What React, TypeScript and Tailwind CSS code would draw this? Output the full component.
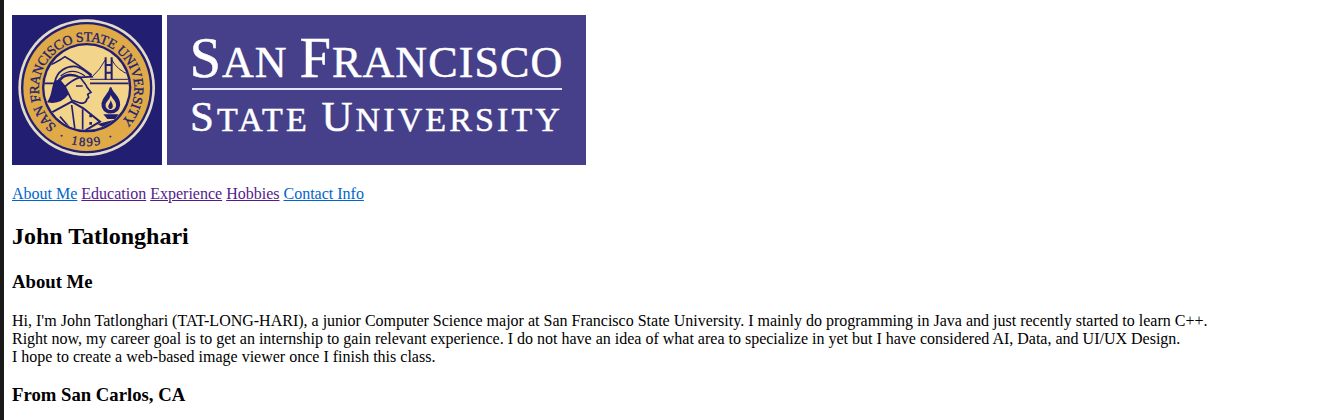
const LINKS = [
  { label: "About Me", visited: false },
  { label: "Education", visited: true },
  { label: "Experience", visited: true },
  { label: "Hobbies", visited: true },
  { label: "Contact Info", visited: false },
];

// drawn in the coordinates of a 3x crop of the logo, hence the viewBox
function Seal() {
  return (
    <svg viewBox="36 45 450 450" className="h-[150px] w-[150px] shrink-0 bg-[#221f73]" aria-label="Seal">
      <defs>
        <path id="seal-top" d="M 170 378 A 143 143 0 1 1 350 378" />
        <path id="seal-bottom" d="M 111 355 A 175 175 0 0 0 409 355" />
        <clipPath id="seal-inner">
          <circle cx="260" cy="263" r="127" />
        </clipPath>
      </defs>
      <circle cx="260" cy="263" r="205" fill="#e4dcc8" />
      <circle cx="260" cy="263" r="197" fill="#221f73" />
      <circle cx="260" cy="263" r="190" fill="#e0aa48" />
      <circle cx="260" cy="263" r="134" fill="#221f73" />
      <circle cx="260" cy="263" r="127" fill="#f2d48a" />
      <text fill="#221f73" stroke="#221f73" strokeWidth="1" fontSize="41" fontFamily="'Liberation Serif', serif">
        <textPath href="#seal-top" textLength="685" lengthAdjust="spacing">
          SAN FRANCISCO STATE UNIVERSITY
        </textPath>
      </text>
      <text fill="#221f73" stroke="#221f73" strokeWidth="1" fontSize="38" letterSpacing="5" wordSpacing="10" fontFamily="'Liberation Serif', serif" textAnchor="middle">
        <textPath href="#seal-bottom" startOffset="50%">
          · 1899 ·
        </textPath>
      </text>
      <g clipPath="url(#seal-inner)">
        <g transform="translate(120 150)" fill="none" stroke="#221f73" strokeWidth="5">
          <path d="M 0 55 Q 40 45 75 20 Q 110 40 155 75" />
          <path d="M 197 90 V 22 M 215 90 V 22 M 197 45 H 215 M 197 68 H 215" strokeWidth="6" />
          <path d="M 155 82 Q 180 60 197 28 M 215 28 Q 230 60 270 75 M 150 88 H 270" strokeWidth="3" />
          <path d="M 0 100 H 50 M 150 100 H 270" />
          <path d="M 45 95 C 50 65 80 45 110 50 C 125 55 145 70 155 80 L 120 82 C 95 72 70 75 60 92 Z" fill="#f2d48a" />
          <path d="M 62 78 C 85 60 110 60 135 78 M 55 90 C 75 70 100 68 120 82" strokeWidth="4" />
          <path d="M 45 95 C 35 115 40 135 25 155 C 50 160 70 150 85 130 L 75 110 L 60 92 Z" fill="#221f73" />
          <path d="M 120 82 C 130 95 140 105 140 110 L 153 127 L 143 133 L 146 142 L 140 148 C 140 158 128 162 118 158 L 95 150 L 75 110 Q 95 90 120 82 Z" fill="#f2d48a" />
          <path d="M 108 108 H 128" strokeWidth="4" />
          <path d="M 30 190 L 95 155 L 130 175 L 180 215 L 130 245 L 60 240 Z" fill="#f2d48a" strokeWidth="6" />
          <path d="M 60 200 L 95 240 M 95 165 L 105 240 M 128 178 V 245" strokeWidth="5" />
          <path d="M 148 198 H 156 M 148 220 H 156" strokeWidth="8" />
          <path d="M 212 112 C 215 130 240 140 238 165 C 236 182 225 188 212 188 C 195 188 185 175 187 160 C 190 140 208 135 212 112 Z" fill="#221f73" />
          <path d="M 212 135 C 218 148 230 155 228 168 C 226 178 218 180 212 180 C 202 180 195 172 197 163 C 200 152 210 148 212 135 Z" fill="#f2d48a" stroke="none" />
          <path d="M 212 150 C 216 160 220 165 218 172 C 215 180 206 178 205 171 C 204 164 211 160 212 150 Z" fill="#221f73" stroke="none" />
          <path d="M 190 193 H 236 L 226 207 H 202 Z M 172 222 L 242 205 V 218 L 195 235 Z" fill="#221f73" stroke="none" />
        </g>
      </g>
    </svg>
  );
}

function Wordmark() {
  return (
    <div className="flex h-[150px] w-[419px] flex-col items-center bg-[#46408a] pt-[13px] font-['Liberation_Serif',serif] text-white [-webkit-text-stroke:0.5px_white]">
      <div className="h-[60px] whitespace-nowrap text-[44px] leading-[60px] tracking-[1.1px]">
        <span className="text-[56px]">S</span>AN <span className="text-[56px]">F</span>RANCISCO
      </div>
      <div className="h-[2px] w-[370px] bg-[#e6e4f2]" />
      <div className="mt-[5px] whitespace-nowrap text-[34px] leading-[44px] tracking-[3.1px]">
        <span className="text-[43px]">S</span>TATE <span className="text-[43px]">U</span>NIVERSITY
      </div>
    </div>
  );
}

export default function App() {
  return (
    <div className="flex h-screen overflow-hidden bg-white font-['Liberation_Serif',serif] text-base leading-[18px] text-black">
      <div className="w-1 shrink-0 bg-[#1a1a1a]" />
      <main className="min-w-0 flex-1 px-2 pt-[15px]">
        <div className="flex gap-[5px]">
          <Seal />
          <Wordmark />
        </div>

        <nav className="mt-5">
          {LINKS.map((link, i) => (
            <span key={link.label}>
              {i > 0 && " "}
              <a href="#" className={link.visited ? "text-[#551a8b] underline" : "text-[#0066cc] underline"}>
                {link.label}
              </a>
            </span>
          ))}
        </nav>

        <h1 className="mt-5 text-2xl leading-[27px] font-bold">John Tatlonghari</h1>
        <h2 className="mt-[21px] text-[18.72px] leading-[21px] font-bold">About Me</h2>
        <p className="mt-5">
          Hi, I'm John Tatlonghari (TAT-LONG-HARI), a junior Computer Science major at San Francisco State University. I
          mainly do programming in Java and just recently started to learn C++.
          <br />
          Right now, my career goal is to get an internship to gain relevant experience. I do not have an idea of what
          area to specialize in yet but I have considered AI, Data, and UI/UX Design.
          <br />I hope to create a web-based image viewer once I finish this class.
        </p>
        <h2 className="mt-[18px] text-[18.72px] leading-[21px] font-bold">From San Carlos, CA</h2>
      </main>
    </div>
  );
}
